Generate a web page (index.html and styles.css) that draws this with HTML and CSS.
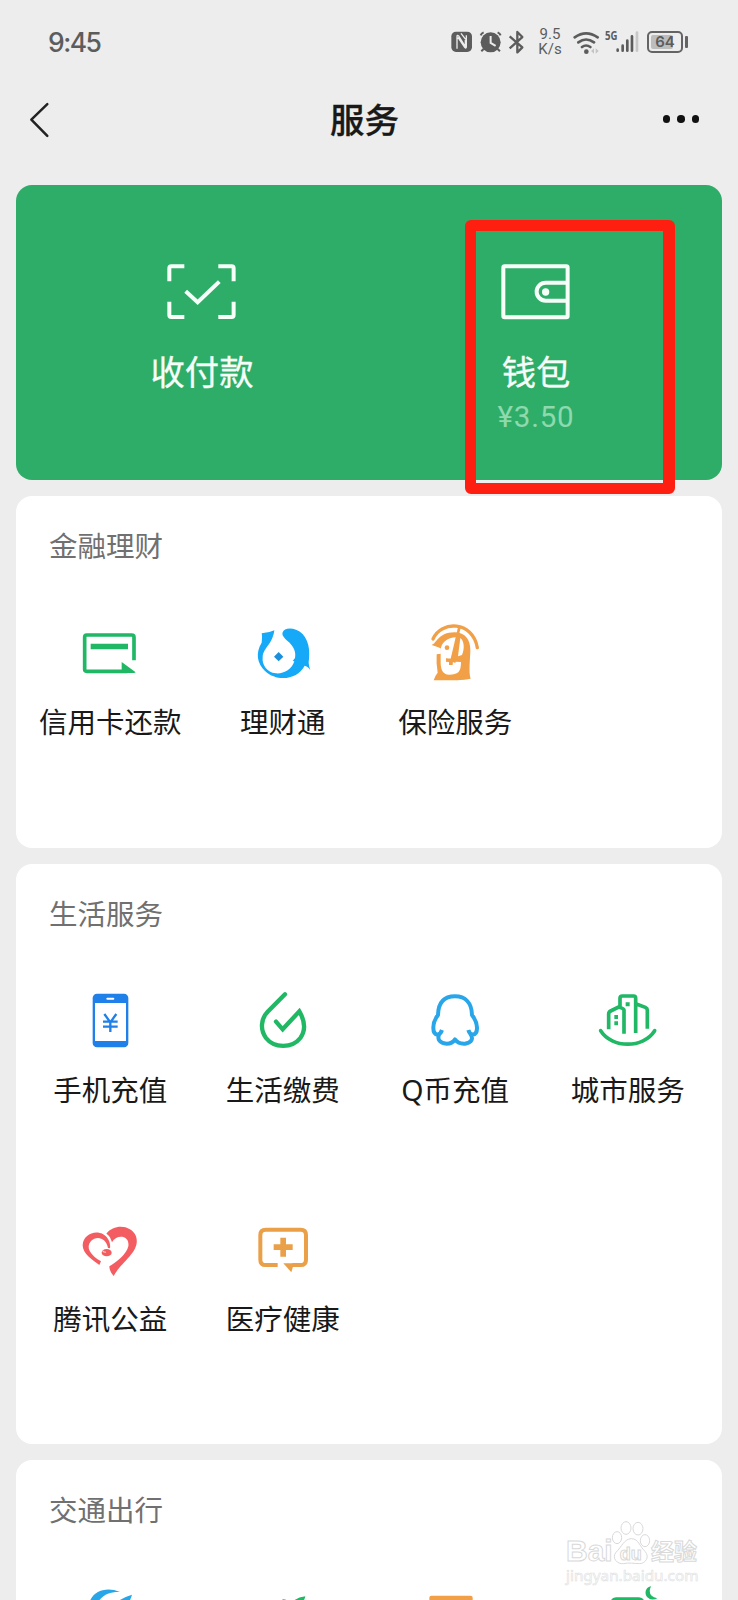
FILE: index.html
```html
<!DOCTYPE html>
<html lang="zh-CN">
<head>
<meta charset="utf-8">
<title>服务</title>
<link rel="stylesheet" href="styles.css">
</head>
<body>
<div class="phone">
  <header class="status">
    <span class="time">9:45</span>
    <svg class="sys" viewBox="60 45 160 100" width="53.3" height="33.3">
      <rect x="64" y="65" width="62" height="61" rx="14" fill="#5c5c5c"/>
      <path d="M81 116V80q0-6 5-2l20 32V90M93 70l14 18M109 76v34q0 7-5 2L84 82" fill="none" stroke="#ececec" stroke-width="4"/>
      <circle cx="182" cy="97" r="30" fill="#5c5c5c"/>
      <path d="M152 76q2-6 9-9M212 76q-2-6-9-9M161 117l-7 7M203 117l7 7" fill="none" stroke="#5c5c5c" stroke-width="6"/>
      <path d="M182 78v21l15 9" fill="none" stroke="#ececec" stroke-width="6"/>
    </svg>
    <svg class="bt" viewBox="235 55 50 80" width="16.7" height="26.7">
      <path d="M240 77l38 33-15 15V64l15 15-38 34" fill="none" stroke="#5c5c5c" stroke-width="7" stroke-linejoin="round"/>
    </svg>
    <span class="speed"><span>9.5</span><span>K/s</span></span>
    <svg class="wifi" viewBox="430 55 80 75" width="26.7" height="25">
      <path d="M435 77q34-24 69 0M446 92q23-17 47 0M457 106q12-9 25 0" fill="none" stroke="#5c5c5c" stroke-width="8" stroke-linecap="round"/>
      <circle cx="470" cy="120" r="7" fill="#5c5c5c"/>
      <path d="M493 110v16l-9-8zM498 110v16l9-8z" fill="#c4c4c4"/>
    </svg>
    <span class="gen">5G</span>
    <svg class="signal" viewBox="560 60 70 70" width="23.3" height="23.3">
      <g stroke="#5c5c5c" stroke-width="8" stroke-linecap="round"><path d="M565 119v3M580 107v15M594 92v30M608 79v43"/><path stroke="#c8c8c8" d="M623 68v54"/></g>
    </svg>
    <span class="battery"><i class="charge"></i><b class="pct">64</b></span>
    <i class="tip"></i>
  </header>

  <nav class="nav">
    <svg class="back" viewBox="85 300 70 114" width="23.3" height="38"><path d="M143 309L95 356l48 49" fill="none" stroke="#222" stroke-width="7.5" stroke-linecap="round" stroke-linejoin="round"/></svg>
    <h1 class="title">服务</h1>
    <span class="more"><i></i><i></i><i></i></span>
  </nav>

  <main class="cards">
    <section class="pay">
      <div class="pay-item">
        <svg viewBox="110 65 214 178" width="71.3" height="59.3" fill="none" stroke="#f7fff9" stroke-width="12">
          <path d="M165 78H126q-6 0-6 6v39M267 78h40q6 0 6 6v39M165 230h-39q-6 0-6-6v-40M267 230h40q6 0 6-6v-40" /><path d="M169 153l36 33 65-62"/>
        </svg>
        <span class="pay-label">收付款</span>
      </div>
      <div class="pay-item">
        <svg viewBox="151 170 214 178" width="71.3" height="59.3" fill="none" stroke="#f7fff9" stroke-width="12">
          <rect x="161" y="183" width="193" height="153" rx="4"/><path d="M354 232h-66a27 27 0 0 0 0 54h66"/><circle cx="288" cy="260" r="11" fill="#f7fff9" stroke="none"/>
        </svg>
        <span class="pay-label">钱包</span>
        <span class="balance">¥3.50</span>
      </div>
      <div class="mark"></div>
    </section>

    <section class="card finance">
      <h2 class="heading">金融理财</h2>
      <div class="grid">
        <div class="item">
          <svg class="icon" viewBox="181 366 180 180">
            <path d="M343 481v-69q0-7-7-7H201q-6 0-6 7v96q0 6 6 6h122" fill="none" stroke="#20b765" stroke-width="11"/>
            <path d="M213 431h112v17H213zM306 486l42 31q-2 2-6 2h-36z" fill="#20b765"/>
          </svg><span>信用卡还款</span>
        </div>
        <div class="item">
          <svg class="icon" viewBox="698 366 180 180">
            <path fill="#15a9f8" d="M762 391q-16 8-38 9 2 8 0 28c-19 31-14 61 10 85 38 35 98 25 119-16q8 1 17 13-7-18-4-33c5-39-8-77-39-88-19-7-37-3-40 8-3 9 4 16 12 24 24 19 28 37 25 53l-7 9 5 1c-8 26-32 38-56 36-26-3-42-26-39-49 2-28 30-38 35-80z"/>
            <path fill="#1b8fdc" d="M775 456l14 14-14 14-14-14z"/>
          </svg><span>理财通</span>
        </div>
        <div class="item">
          <svg class="icon" viewBox="166 66 180 180" >
            <path d="M190 117C214 61 309 62 323 143" fill="none" stroke="#f2a048" stroke-width="10" stroke-linecap="round"/>
            <path fill="#f2a048" d="M186 135c14-3 20-38 68-38 34 0 48 24 48 52 0 25-6 68 1 87-23 5-50 5-111 5q4-14 12-23-5-27-3-55l12-2v-16q-10-4-27-10z"/>
            <path fill="#fff" d="M262 112l-19 67-14-4v10l9 1v9h11v-9l8 3 1-4 16 1c0 32-10 37-35 38-22-1-27-18-26-45v-24c-2-27 22-44 49-43z"/>
            <path fill="#fff" d="M272 114c11 8 14 31 5 51l-12 4zM198 147h15v14h-15z"/>
            <path d="M269 82l-25 109" stroke="#f2a048" stroke-width="8"/>
            <path d="M230 179h21" stroke="#f2a048" stroke-width="7"/>
            <circle cx="232" cy="143" r="7" fill="#f2a048"/>
          </svg><span>保险服务</span>
        </div>
      </div>
    </section>

    <section class="card life">
      <h2 class="heading">生活服务</h2>
      <div class="grid">
        <div class="item">
          <svg class="icon" viewBox="151 60 180 180">
            <rect x="189" y="71" width="107" height="161" rx="13" fill="#1e80e8"/><path d="M196 99h93v114h-93z" fill="#fff"/><path d="M233 86h18" stroke="#fff" stroke-width="6" stroke-linecap="round"/>
            <path d="M224 132l18 25 18-25M220 155h44M220 170h44M242 155v31" fill="none" stroke="#1e80e8" stroke-width="7"/>
          </svg><span>手机充值</span>
        </div>
        <div class="item">
          <svg class="icon" viewBox="668 60 180 180"><path d="M764 73l-52 52c-22 23-22 56-5 79 25 32 79 31 103 0 17-24 14-51-3-80l-50 54-20-23" fill="none" stroke="#20b765" stroke-width="13" stroke-linecap="round"/></svg><span>生活缴费</span>
        </div>
        <div class="item">
          <svg class="icon" viewBox="136 60 180 180"><path d="M187 180q-4 12-13 14c-18-2-17-36 1-59 1-38 20-56 51-56s50 19 51 56c18 23 21 57 2 59q-10-3-13-14M180 190c-10 18 1 30 21 31 12 0 20-5 25-13 6 8 17 14 30 13 20-3 27-15 15-31" fill="none" stroke="#29a6ea" stroke-width="12" stroke-linejoin="round"/></svg><span>Q币充值</span>
        </div>
        <div class="item">
          <svg class="icon" viewBox="653 60 180 180"><g fill="none" stroke="#20b765" stroke-width="11"><path d="M685 178v-46q0-6 6-9l24-12q15 4 16 9v71M719 112V85q0-7 7-7h34q6 0 6 7v104M768 102l27 10q6 3 6 8v56"/><path d="M661 182c34 54 128 54 162 0" stroke-linecap="round"/></g><path d="M736 97h12v12h-12zM702 135h11v12h-11zM702 154h11v12h-11z" fill="#20b765"/></svg><span>城市服务</span>
        </div>
        <div class="item">
          <svg class="icon" viewBox="151 57 180 180"><g fill="#f35d61"><path d="M214 184l-5 11c-20-14-50-34-50-59 1-39 55-53 76-19q8 12 6 28l-6-1c-5-29-33-39-51-21-17 20-2 42 30 61z"/><path d="M230 101c24-31 76-26 89 8 15 45-44 75-67 119q-13-14-13-29c19-10 52-36 57-60 5-33-34-38-49-12-4-14-8-20-17-26z"/><ellipse cx="231" cy="158" rx="15" ry="11"/></g><path d="M219 153q5 4 10 3" stroke="#ffc5c4" stroke-width="4"/></svg><span>腾讯公益</span>
        </div>
        <div class="item">
          <svg class="icon" viewBox="668 57 180 180"><path d="M742 195h-36q-16 0-16-16v-74q0-16 16-16h105q16 0 16 16v74q0 16-16 16h-25" fill="none" stroke="#eaa048" stroke-width="12"/><path d="M759 190h32l-8 27zM750 113h17v20h20v17h-20v20h-17v-20h-20v-17h20z" fill="#eaa048"/></svg><span>医疗健康</span>
        </div>
      </div>
    </section>

    <section class="card travel">
      <h2 class="heading">交通出行</h2>
      <div class="grid">
        <div class="item"><svg class="icon" viewBox="181 498 180 180"><path d="M209 548c10-34 50-50 92-32-30-1-49 6-68 32zM291 548q15-15 46-24-3 12-13 30z" fill="#29a6e8"/></svg></div>
        <div class="item"><svg class="icon" viewBox="698 498 180 180"><path d="M812 550q15-18 43-21-1 12-18 25zM786 538q16-1 23 12h-17z" fill="#20b765"/></svg></div>
        <div class="item"><svg class="icon" viewBox="76 288 180 180"><rect x="89" y="317" width="130" height="60" rx="6" fill="#f2a048"/></svg></div>
        <div class="item"><svg class="icon" viewBox="593 288 180 180"><path d="M630 335q4-13 17-13h69q13 0 17 13zM752 289q-13 29 19 36-18 9-30-3c-12-15-2-31 11-33z" fill="#20b765"/></svg></div>
      </div>
    </section>
  </main>

  <aside class="watermark">
    <div class="wm-line"><span class="wm-bai">Bai</span>
      <svg class="paw" viewBox="632 86 120 136" width="40" height="45.3" fill="#fff" stroke="#d9d9d9" stroke-width="3"><ellipse cx="650" cy="139" rx="14" ry="18"/><ellipse cx="677" cy="110" rx="15" ry="19"/><ellipse cx="713" cy="112" rx="15" ry="19"/><ellipse cx="734" cy="148" rx="14" ry="18"/><path d="M693 142c22 0 25 24 41 38 16 18 0 37-16 37-17 0-33-4-48 0-19 3-37-17-23-34 17-16 24-40 46-41z"/><text class="wm-du" x="658" y="206">du</text></svg>
      <span class="wm-cn">经验</span></div>
    <div class="wm-url">jingyan.baidu.com</div>
  </aside>
</div>
</body>
</html>
```
FILE: styles.css
```css
* { box-sizing: border-box; }
body { margin: 0; background: #ededed; font-family: "Noto Sans", "Noto Sans CJK SC", sans-serif; }
.phone { position: relative; width: 738px; height: 1600px; overflow: hidden; background: #ededed; color: #191919; }
svg { display: block; flex: none; }

.status { display: flex; align-items: center; height: 84px; padding-left: 48px; color: #5c5c5c; }
.time { width: 402px; font: 500 26.5px/32px Inter, sans-serif; letter-spacing: -1.5px; }
.sys { margin-top: -1px; }
.bt { margin-left: 5px; }
.speed { display: flex; flex-direction: column; align-items: center; width: 28px; margin-left: 11px; font: 15px/15.5px Roboto, sans-serif; }
.wifi { margin-left: 9px; }
.gen { width: 11px; margin: -12px 0 0 5px; font: 700 12px/12px "Open Sans", sans-serif; transform: scaleX(.8); transform-origin: left; }
.battery { position: relative; display: flex; align-items: center; justify-content: center; width: 36px; height: 22px; margin-left: 8px; border: 2px solid #646464; border-radius: 5px; }
.charge { position: absolute; left: 2px; top: 2px; width: 22px; height: 14px; background: #bdbdbd; border-radius: 2px; }
.pct { position: relative; font: 600 15px/16px Inter, sans-serif; }
.tip { width: 3px; height: 12px; margin-left: 2px; background: #646464; border-radius: 1px; }

.nav { display: grid; grid-template-columns: 1fr auto 1fr; align-items: center; height: 72px; padding: 0 39px 0 28px; }
.title { margin: 0 0 1px 2px; font-size: 34.5px; line-height: 48px; font-weight: 500; -webkit-text-stroke: .3px #191919; }
.more { display: flex; justify-content: flex-end; gap: 7px; padding-bottom: 2px; }
.more i { width: 7.5px; height: 7.5px; border-radius: 50%; background: #111; }

.cards { display: flex; flex-direction: column; gap: 16.5px; padding: 28.5px 16px 0; }
.pay { position: relative; display: grid; grid-template-columns: 372px 296px; height: 295px; background: #2ead69; border-radius: 16px; color: #f7fff9; }
.pay-item { display: flex; flex-direction: column; align-items: center; padding-top: 77px; }
.pay-label { margin-top: 27px; font-size: 34.3px; line-height: 48px; -webkit-text-stroke: .3px #f7fff9; }
.balance { margin-top: 1px; font: 400 29.5px/40px Roboto, sans-serif; letter-spacing: .8px; color: #8fd9ae; }
.mark { position: absolute; left: 449px; top: 35px; width: 210px; height: 274px; border: 11px solid #ff1f10; border-right-width: 12px; border-radius: 6px; box-shadow: inset 0 -2px #ededed; }

.card { background: #fff; border-radius: 16px; padding: 30px 8px 0; }
.finance { height: 351.5px; }
.life { height: 579.5px; }
.travel { height: 352px; }
.heading { margin: 0 0 0 25px; font-size: 28.5px; line-height: 40px; font-weight: 400; color: #707070; }
.grid { display: grid; grid-template-columns: repeat(4, 1fr); grid-auto-rows: 229px; padding-top: 55.5px; }
.item { display: flex; flex-direction: column; align-items: center; font-size: 28.5px; line-height: 40px; white-space: nowrap; }
.item span { margin-top: 20px; }
.icon { width: 60px; height: 60px; overflow: visible; }

.watermark { position: absolute; left: 566px; top: 1518px; color: #fff; -webkit-text-stroke: 1px #d9d9d9; }
.wm-line { display: flex; align-items: flex-end; height: 47px; }
.wm-bai { width: 45px; font: 700 30px/28px "Liberation Sans", sans-serif; }
.wm-du { font: 700 54px "Liberation Sans", sans-serif; }
.wm-cn { font-size: 23px; line-height: 27px; font-weight: 700; }
.wm-url { font: 15.3px/20px "Noto Sans", sans-serif; -webkit-text-stroke: .6px #e0e0e0; }
```
